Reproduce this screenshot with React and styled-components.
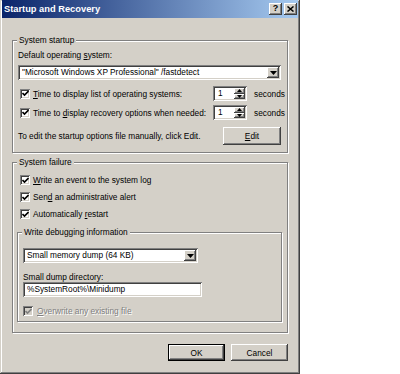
import React from "react";
import styled, { createGlobalStyle } from "styled-components";

const FACE = "#d4d0c8";

const GlobalStyle = createGlobalStyle`
  html, body {
    margin: 0;
    padding: 0;
    background: #ffffff;
  }
  body {
    font-family: "Liberation Sans", Arial, sans-serif;
    font-size: 8.3px;
    color: #000000;
  }
`;

const raised = `
  box-shadow: inset -1px -1px 0 #404040, inset 1px 1px 0 #ffffff,
    inset -2px -2px 0 #808080, inset 2px 2px 0 ${FACE};
`;

const sunken = `
  box-shadow: inset 1px 1px 0 #808080, inset -1px -1px 0 #ffffff,
    inset 2px 2px 0 #404040, inset -2px -2px 0 ${FACE};
`;

const Window = styled.div`
  width: 300px;
  height: 374px;
  box-sizing: border-box;
  background: ${FACE};
  padding: 0 2px 2px 2px;
  box-shadow: inset -1px -1px 0 #404040, inset 1px 1px 0 ${FACE},
    inset -2px -2px 0 #808080, inset 2px 2px 0 #ffffff;
  display: flex;
  flex-direction: column;
`;

const TitleBar = styled.div`
  height: 18px;
  display: flex;
  align-items: center;
  gap: 2px;
  padding: 0 1px 0 2px;
  background: linear-gradient(to right, #0a246a, #a6caf0);
`;

const TitleText = styled.div`
  flex: 1;
  color: #ffffff;
  font-weight: bold;
  font-size: 9.3px;
  line-height: 18px;
  white-space: nowrap;
`;

const CaptionButton = styled.div`
  width: 13px;
  height: 12px;
  box-sizing: border-box;
  background: ${FACE};
  ${raised}
  display: flex;
  align-items: center;
  justify-content: center;
  font-weight: bold;
  font-size: 9px;
  line-height: 1;
  padding-bottom: 1px;
`;

const Body = styled.div`
  flex: 1;
  display: flex;
  flex-direction: column;
  padding: 17px 10px 0 10px;
`;

const Group = styled.fieldset`
  margin: ${({ $mt }) => $mt || 0}px 0 0 0;
  padding: ${({ $pad }) => $pad};
  border: 1px solid #808080;
  box-shadow: inset 1px 1px 0 #ffffff, 1px 1px 0 #ffffff;
  display: flex;
  flex-direction: column;
  min-width: 0;
`;

const InnerGroup = styled(Group)`
  margin-left: -1px;
`;

const Legend = styled.legend`
  padding: 0 2px;
  margin-left: -1px;
  line-height: 10px;
  background: ${FACE};
`;

const Label = styled.div`
  line-height: 10px;
  margin-top: ${({ $mt }) => $mt || 0}px;
  white-space: nowrap;
`;

const Key = styled.span`
  text-decoration: underline;
`;

const Field = styled.div`
  height: 15px;
  box-sizing: border-box;
  background: #ffffff;
  ${sunken}
  display: flex;
  align-items: center;
  padding: 2px 2px 2px 4px;
  margin-top: ${({ $mt }) => $mt || 0}px;
  width: ${({ $w }) => ($w ? `${$w}px` : "auto")};
  white-space: nowrap;
`;

const FieldText = styled.span`
  flex: 1;
  overflow: hidden;
  line-height: 11px;
`;

const ArrowButton = styled.div`
  width: 12px;
  align-self: stretch;
  background: ${FACE};
  ${raised}
  display: flex;
  align-items: center;
  justify-content: center;
`;

const Row = styled.div`
  display: flex;
  align-items: center;
  height: ${({ $h }) => $h || 14}px;
  margin-top: ${({ $mt }) => $mt || 0}px;
  padding-left: ${({ $indent }) => ($indent === undefined ? 2 : $indent)}px;
  white-space: nowrap;
`;

const Box = styled.div`
  width: 10px;
  height: 10px;
  box-sizing: border-box;
  flex-shrink: 0;
  background: ${({ $disabled }) => ($disabled ? FACE : "#ffffff")};
  ${sunken}
  display: flex;
  align-items: center;
  justify-content: center;
  margin-right: ${({ $gap }) => $gap || 3}px;
`;

const CheckText = styled.span`
  line-height: 10px;
  width: ${({ $w }) => ($w ? `${$w}px` : "auto")};
  flex-shrink: 0;
  color: ${({ $disabled }) => ($disabled ? "#808080" : "#000000")};
  text-shadow: ${({ $disabled }) => ($disabled ? "1px 1px 0 #ffffff" : "none")};
`;

const Spin = styled.div`
  width: 34px;
  height: 15px;
  box-sizing: border-box;
  flex-shrink: 0;
  background: #ffffff;
  ${sunken}
  display: flex;
  padding: 2px;
  margin-right: 7px;
`;

const SpinValue = styled.span`
  flex: 1;
  padding-left: 3px;
  line-height: 11px;
`;

const SpinButtons = styled.div`
  width: 11px;
  display: flex;
  flex-direction: column;
`;

const SpinButton = styled.div`
  flex: 1;
  background: ${FACE};
  ${raised}
  display: flex;
  align-items: center;
  justify-content: center;
`;

const EditRow = styled.div`
  display: flex;
  align-items: center;
  justify-content: space-between;
  margin-top: 7px;
`;

const Button = styled.div`
  width: ${({ $w }) => $w || 57}px;
  height: ${({ $h }) => $h || 17}px;
  box-sizing: border-box;
  background: ${FACE};
  ${raised}
  border: ${({ $default }) => ($default ? "1px solid #000000" : "none")};
  display: flex;
  align-items: center;
  justify-content: center;
  line-height: 10px;
`;

const ButtonRow = styled.div`
  display: flex;
  justify-content: flex-end;
  gap: 6px;
  margin-top: 11px;
`;

const Check = ({ color = "#000" }) => (
  <svg width="7" height="7" viewBox="0 0 7 7">
    <polyline points="0.5,3 2.5,5 6.5,1" fill="none" stroke={color} strokeWidth="1.6" />
  </svg>
);

const Down = ({ w = 7, h = 4 }) => (
  <svg width={w} height={h} viewBox="0 0 7 4">
    <polygon points="0,0 7,0 3.5,4" fill="#000" />
  </svg>
);

const Up = () => (
  <svg width="5" height="3" viewBox="0 0 5 3">
    <polygon points="0,3 5,3 2.5,0" fill="#000" />
  </svg>
);

const CheckItem = ({ children, disabled, indent, mt, gap }) => (
  <Row $indent={indent} $mt={mt}>
    <Box $disabled={disabled} $gap={gap}>
      <Check color={disabled ? "#808080" : "#000"} />
    </Box>
    <CheckText $disabled={disabled}>{children}</CheckText>
  </Row>
);

const SpinItem = ({ children, mt }) => (
  <Row $h={15} $mt={mt}>
    <Box>
      <Check />
    </Box>
    <CheckText $w={180}>{children}</CheckText>
    <Spin>
      <SpinValue>1</SpinValue>
      <SpinButtons>
        <SpinButton>
          <Up />
        </SpinButton>
        <SpinButton>
          <Down w={5} h={3} />
        </SpinButton>
      </SpinButtons>
    </Spin>
    <CheckText>seconds</CheckText>
  </Row>
);

export default function App() {
  return (
    <>
      <GlobalStyle />
      <Window>
        <TitleBar>
          <TitleText>Startup and Recovery</TitleText>
          <CaptionButton>?</CaptionButton>
          <CaptionButton>
            <svg width="7" height="6" viewBox="0 0 7 6">
              <path d="M0.5 0.5 L6.5 5.5 M6.5 0.5 L0.5 5.5" stroke="#000" strokeWidth="1.5" />
            </svg>
          </CaptionButton>
        </TitleBar>
        <Body>
          <Group $pad="5px 6px 7px 5px">
            <Legend>System startup</Legend>
            <Label>
              Default operating <Key>s</Key>ystem:
            </Label>
            <Field $mt={5}>
              <FieldText>"Microsoft Windows XP Professional" /fastdetect</FieldText>
              <ArrowButton>
                <Down />
              </ArrowButton>
            </Field>
            <SpinItem mt={6}>
              <Key>T</Key>ime to display list of operating systems:
            </SpinItem>
            <SpinItem mt={4}>
              Time to <Key>d</Key>isplay recovery options when needed:
            </SpinItem>
            <EditRow>
              <Label>To edit the startup options file manually, click Edit.</Label>
              <Button $w={58} $h={18}>
                <Key>E</Key>dit
              </Button>
            </EditRow>
          </Group>

          <Group $mt={4} $pad="6px 5px 10px 5px">
            <Legend>System failure</Legend>
            <CheckItem>
              <Key>W</Key>rite an event to the system log
            </CheckItem>
            <CheckItem mt={3}>
              Sen<Key>d</Key> an administrative alert
            </CheckItem>
            <CheckItem mt={3}>
              Automatically <Key>r</Key>estart
            </CheckItem>
            <InnerGroup $mt={6} $pad="11px 5px 3px 5px">
              <Legend>Write debugging information</Legend>
              <Field $w={175}>
                <FieldText>Small memory dump (64 KB)</FieldText>
                <ArrowButton>
                  <Down />
                </ArrowButton>
              </Field>
              <Label $mt={9}>Small dump directory:</Label>
              <Field $w={179}>
                <FieldText>%SystemRoot%\Minidump</FieldText>
              </Field>
              <CheckItem disabled indent={0} mt={7} gap={4}>
                <Key>O</Key>verwrite any existing file
              </CheckItem>
            </InnerGroup>
          </Group>

          <ButtonRow>
            <Button $default>OK</Button>
            <Button>Cancel</Button>
          </ButtonRow>
        </Body>
      </Window>
    </>
  );
}
